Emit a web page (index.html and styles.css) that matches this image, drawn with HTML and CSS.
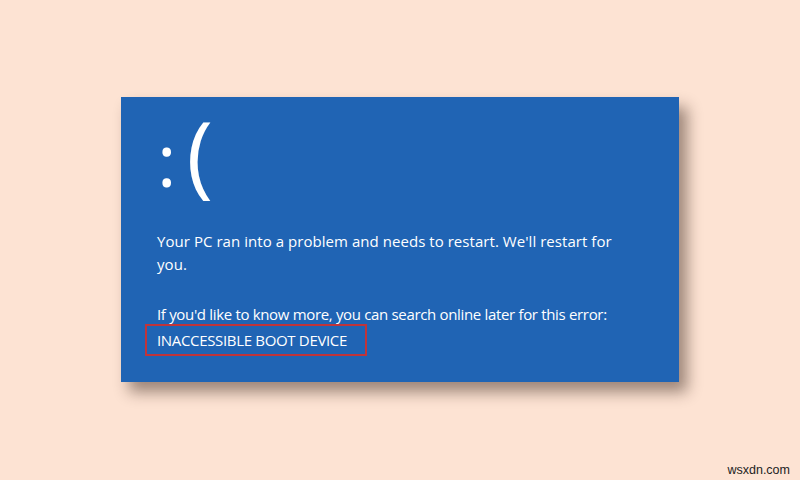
FILE: index.html
```html
<!DOCTYPE html>
<html>
<head>
<meta charset="utf-8">
<link rel="stylesheet" href="styles.css">
</head>
<body>
<div class="page">
  <div class="bsod">
    <div class="face"><span class="colon">:</span><span class="paren">(</span></div>
    <p class="msg">Your PC ran into a problem and needs to restart. We'll restart for<br>you.</p>
    <p class="info">If you'd like to know more, you can search online later for this error:<br><span class="code">INACCESSIBLE BOOT DEVICE</span></p>
  </div>
  <div class="mark">wsxdn.com</div>
</div>
</body>
</html>
```
FILE: styles.css
```css
html, body {
  margin: 0;
  padding: 0;
}
body {
  width: 800px;
  height: 480px;
  background: #fde3d3;
  overflow: hidden;
  font-family: "Open Sans", "Noto Sans", sans-serif;
}
.page {
  width: 800px;
  height: 480px;
  padding: 97px 0 0 121px;
  box-sizing: border-box;
  position: relative;
}
.bsod {
  width: 558px;
  height: 285px;
  box-sizing: border-box;
  background: #2064b4;
  color: #ffffff;
  padding: 15px 0 0 36px;
  box-shadow: 8px 10px 14px rgba(40, 20, 10, 0.45);
}
.face {
  display: flex;
  align-items: baseline;
  height: 80px;
  line-height: 80px;
  font-weight: 400;
}
.colon {
  font-size: 74px;
  margin-right: 10px;
}
.paren {
  font-size: 90px;
}
.msg, .info {
  margin: 0;
  font-size: 15px;
  line-height: 23px;
}
.msg {
  margin-top: 38px;
  letter-spacing: 0.05px;
}
.info {
  margin-top: 27px;
  letter-spacing: -0.33px;
}
.code {
  display: inline-block;
  outline: 2px solid #c0343a;
  padding: 3px 18px 3px 10px;
  margin-left: -10px;
  line-height: 22px;
}
.mark {
  position: absolute;
  right: 10px;
  bottom: 3px;
  font-family: "Liberation Sans", sans-serif;
  font-size: 12.5px;
  color: #222;
}
```
